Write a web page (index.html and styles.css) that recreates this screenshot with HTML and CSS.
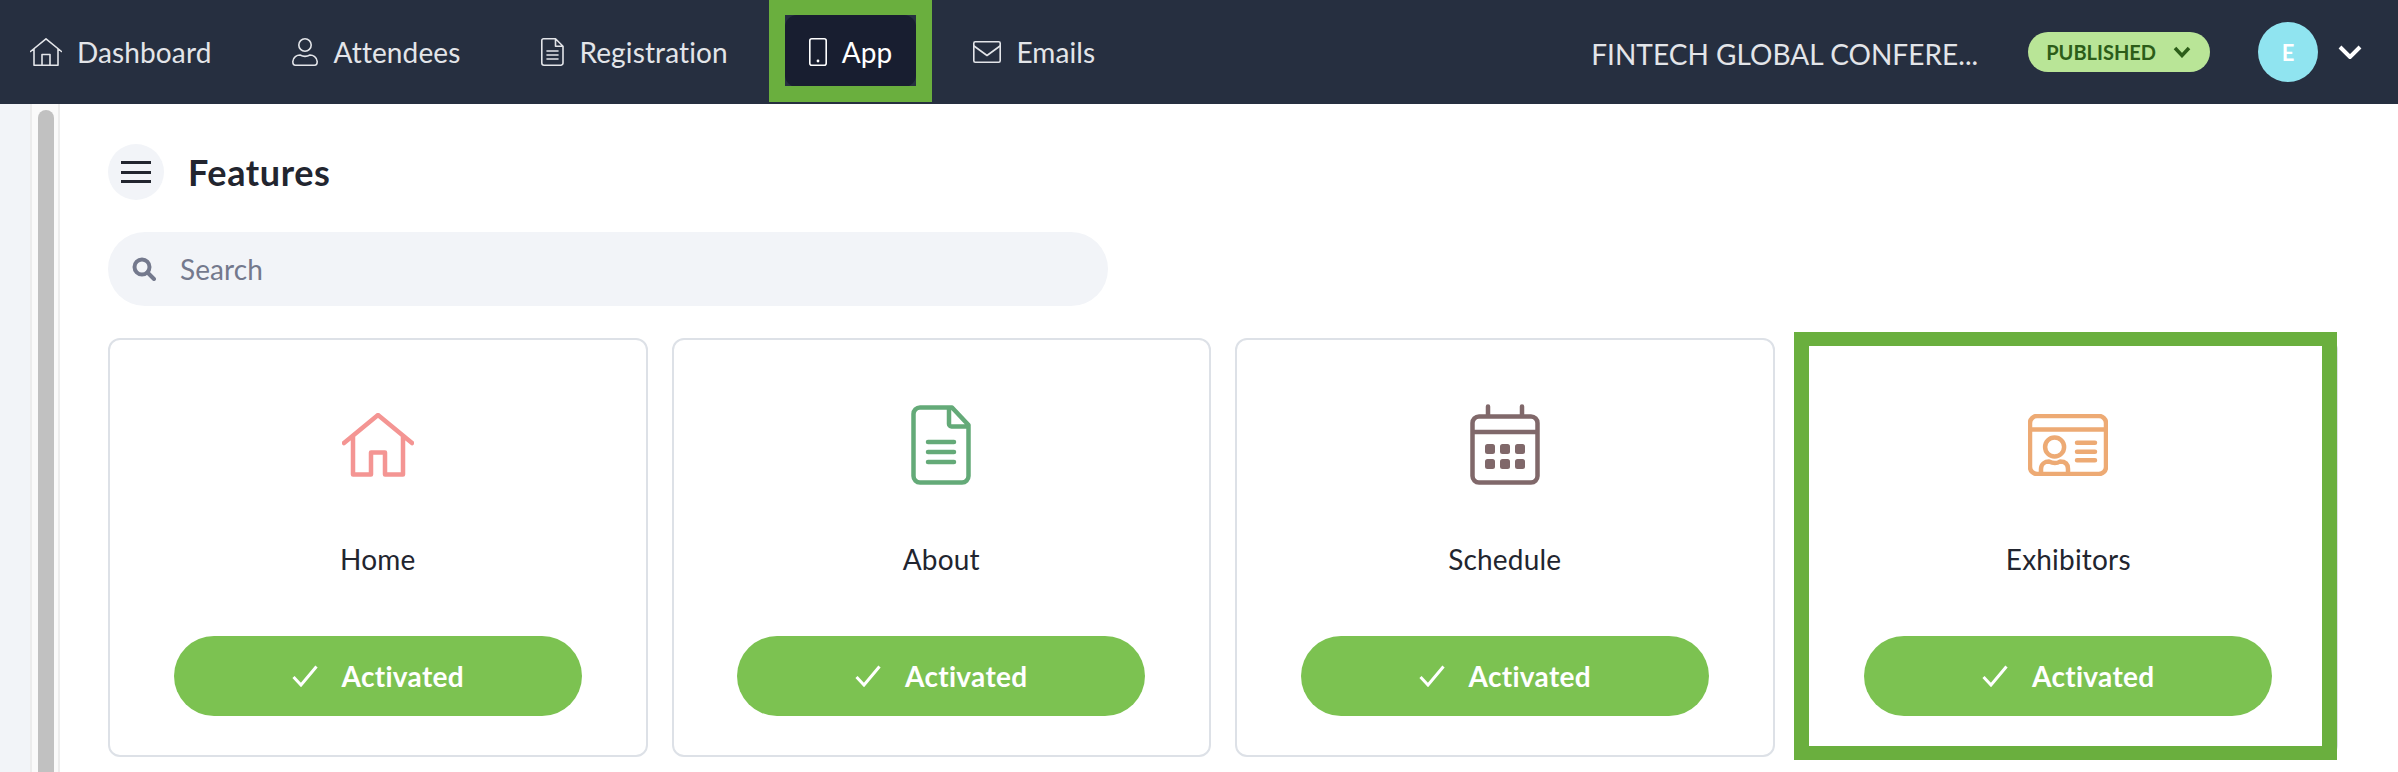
FILE: index.html
```html
<!DOCTYPE html>
<html lang="en">
<head>
<meta charset="utf-8">
<title>Features</title>
<link rel="stylesheet" href="styles.css">
</head>
<body>
<header class="topbar">
  <nav class="nav">
    <a class="nav-item">
      <svg class="nav-icon" width="32" height="28" viewBox="0 0 32 28"><path d="M0.5 13.5 16 0.8 31.5 13.5M4 11V27.2H28V11M12 27.2V16.5H20V27.2"/></svg>
      <span>Dashboard</span>
    </a>
    <a class="nav-item">
      <svg class="nav-icon" width="26" height="28" viewBox="0 0 26 28"><circle cx="13" cy="7" r="6.2"/><path d="M8 17C5 17 1 19 0.8 23.5 0.8 26 1.6 27.2 3.5 27.2H22.5C24.4 27.2 25.2 26 25.2 23.5 25 19 21 17 18 17 15 18.6 11 18.6 8 17Z"/></svg>
      <span>Attendees</span>
    </a>
    <a class="nav-item">
      <svg class="nav-icon" width="23" height="28" viewBox="0 0 23 28"><path d="M2.5 0.8H14.5L22 8.2V25A2.2 2.2 0 0 1 19.8 27.2H3A2.2 2.2 0 0 1 0.8 25V2.5A1.7 1.7 0 0 1 2.5 0.8ZM14.5 0.8V8.2H22M6 13H17M6 17H17M6 21H17"/></svg>
      <span>Registration</span>
    </a>
    <a class="nav-item nav-item-active">
      <svg class="nav-icon" width="18" height="28" viewBox="0 0 18 28"><rect x="0.8" y="0.8" width="16.4" height="26.4" rx="2"/><circle class="icon-dot" cx="9" cy="23" r="1.4"/></svg>
      <span>App</span>
      <span class="mark mark-nav"></span>
    </a>
    <a class="nav-item">
      <svg class="nav-icon" width="28" height="22" viewBox="0 0 28 22"><rect x="0.8" y="0.8" width="26.4" height="20.4" rx="1.5"/><path d="M1 5 14 14.5 27 5"/></svg>
      <span>Emails</span>
    </a>
  </nav>
  <div class="topbar-right">
    <span class="event-name">FINTECH GLOBAL CONFERE...</span>
    <span class="status">
      <span>PUBLISHED</span>
      <svg class="status-chevron" width="18" height="12" viewBox="0 0 18 12"><path d="M2 2 9 9.5 16 2"/></svg>
    </span>
    <span class="avatar">E</span>
    <svg class="user-chevron" width="24" height="14" viewBox="0 0 24 14"><path d="M2 2 12 12 22 2"/></svg>
  </div>
</header>

<div class="layout">
  <div class="side-strip"></div>
  <div class="scroll-track"><div class="scroll-thumb"></div></div>
  <main class="main">
    <div class="page-head">
      <span class="menu-btn"><span class="menu-bars"></span></span>
      <h1 class="page-title">Features</h1>
    </div>
    <div class="search">
      <svg class="search-icon" width="24" height="24" viewBox="0 0 24 24"><circle cx="10" cy="10" r="7.5"/><path d="M15.5 15.5 22 22"/></svg>
      <span>Search</span>
    </div>
    <section class="cards">
      <article class="card">
        <div class="card-icon">
          <svg class="icon-home" width="72" height="64" viewBox="0 0 72 64"><path d="M2 30 36 2 70 30M11 23V61.5H29V39.5H43V61.5H61V23"/></svg>
        </div>
        <div class="card-name">Home</div>
        <div class="activated"><svg class="check" width="26" height="22" viewBox="0 0 26 22"><path d="M1.5 12 9 20 24.500 1.500"/></svg><span>Activated</span></div>
      </article>
      <article class="card">
        <div class="card-icon">
          <svg class="icon-about" width="60" height="80" viewBox="0 0 60 80"><path d="M9 2.500H41L57.500 20V71A6.500 6.500 0 0 1 51 77.500H9A6.500 6.500 0 0 1 2.500 71V9A6.500 6.500 0 0 1 9 2.500ZM38 2.500V19A2.500 2.500 0 0 0 40.500 21.500H57.500M17 37H43M17 47H43M17 57H43"/></svg>
        </div>
        <div class="card-name">About</div>
        <div class="activated"><svg class="check" width="26" height="22" viewBox="0 0 26 22"><path d="M1.5 12 9 20 24.500 1.500"/></svg><span>Activated</span></div>
      </article>
      <article class="card">
        <div class="card-icon">
          <svg class="icon-schedule" width="70" height="81" viewBox="0 0 70 81"><path d="M9 12.500H61A6.500 6.500 0 0 1 67.500 19V72A6.500 6.500 0 0 1 61 78.500H9A6.500 6.500 0 0 1 2.500 72V19A6.500 6.500 0 0 1 9 12.500ZM2.500 28H67.500M18 2.500V12.500M52 2.500V12.500"/><g class="icon-fill"><rect x="15" y="40" width="10" height="10" rx="2.500"/><rect x="30" y="40" width="10" height="10" rx="2.500"/><rect x="45" y="40" width="10" height="10" rx="2.500"/><rect x="15" y="55" width="10" height="10" rx="2.500"/><rect x="30" y="55" width="10" height="10" rx="2.500"/><rect x="45" y="55" width="10" height="10" rx="2.500"/></g></svg>
        </div>
        <div class="card-name">Schedule</div>
        <div class="activated"><svg class="check" width="26" height="22" viewBox="0 0 26 22"><path d="M1.5 12 9 20 24.500 1.500"/></svg><span>Activated</span></div>
      </article>
      <article class="card">
        <div class="card-icon">
          <svg class="icon-exhibitors" width="80" height="62" viewBox="0 0 80 62"><path d="M9 2H71A7 7 0 0 1 78 9V53A7 7 0 0 1 71 60H9A7 7 0 0 1 2 53V9A7 7 0 0 1 9 2ZM2 15.500H78M49 28.700H67M49 37.700H67M49 46.300H67M13 60V55C13 50 17 47.500 21 47.500 25 49.500 29 49.500 32 47.500 37 47.500 40 50 40 55V60"/><circle cx="26.600" cy="33" r="9.500"/></svg>
        </div>
        <div class="card-name">Exhibitors</div>
        <div class="activated"><svg class="check" width="26" height="22" viewBox="0 0 26 22"><path d="M1.5 12 9 20 24.500 1.500"/></svg><span>Activated</span></div>
        <span class="mark mark-card"></span>
      </article>
    </section>
  </main>
</div>
</body>
</html>
```
FILE: styles.css
```css
* { box-sizing: border-box; }
html, body { margin: 0; height: 772px; overflow: hidden; background: #fff; }
body { font-family: "Lato", "Liberation Sans", sans-serif; font-size: 28px; color: #22252f; }

.topbar { display: flex; align-items: center; justify-content: space-between; height: 104px; padding: 0 36px 2px 6px; background: #262f40; }
.nav { display: flex; align-items: center; gap: 33px; letter-spacing: 0.12px; }
.nav-item { position: relative; display: flex; align-items: center; gap: 15px; height: 72px; padding: 2px 24px 0; border-radius: 12px; color: #e3e5e9; line-height: 1; }
.nav-icon { fill: none; stroke: currentColor; stroke-width: 1.6; stroke-linejoin: round; stroke-linecap: round; }
.nav-item-active { background: #181e30; color: #fff; }
.icon-dot { fill: currentColor; stroke: none; }

.mark { position: absolute; border-style: solid; border-color: #6aaf3e; pointer-events: none; }
.mark-nav { top: -16px; left: -16px; right: -16px; bottom: -15px; border-width: 16px; }
.mark-card { top: -8px; left: -6.500px; right: -1px; bottom: -5px; border-width: 14px 15px; }

.topbar-right { display: flex; align-items: center; padding-top: 2px; }
.event-name { width: 386px; white-space: nowrap; color: #e3e5e9; letter-spacing: 0.04px; margin-top: 4px; }
.status { display: flex; align-items: center; gap: 17px; height: 40px; margin-left: 51px; padding: 0 19px 0 18px; border-radius: 20px; background: #b9e597; color: #2c5d19; font-size: 20px; font-weight: 700; }
.status-chevron { fill: none; stroke: #2c5d19; stroke-width: 3.500; }
.avatar { display: flex; align-items: center; justify-content: center; width: 60px; height: 60px; margin-left: 48px; border-radius: 50%; background: #90e4f0; color: #fff; font-size: 22px; font-weight: 700; }
.user-chevron { margin-left: 20px; fill: none; stroke: #fff; stroke-width: 4; }

.layout { display: flex; height: 668px; }
.side-strip { width: 30px; background: #f2f4f8; }
.scroll-track { display: flex; width: 30px; padding: 6px 4px 0 6px; background: #fafafa; border-left: 2px solid #ececec; border-right: 2px solid #ececec; }
.scroll-thumb { width: 16px; background: #c1c1c1; border-radius: 8px 8px 0 0; }
.main { flex: 1; min-width: 0; padding: 40px 60px 0 48px; }

.page-head { display: flex; align-items: center; gap: 24px; height: 56px; }
.menu-btn { display: flex; align-items: center; justify-content: center; width: 56px; height: 56px; border-radius: 50%; background: #f2f4f8; }
.menu-bars { position: relative; width: 30px; height: 22px; border-top: 3px solid #22252f; border-bottom: 3px solid #22252f; }
.menu-bars::before { content: ""; position: absolute; left: 0; right: 0; top: 6.500px; height: 3px; background: #22252f; }
.page-title { margin: 0; font-size: 36px; font-weight: 700; letter-spacing: 0.6px; color: #22252f; }

.search { display: flex; align-items: center; gap: 24px; width: 1000px; height: 74px; margin-top: 32px; padding-left: 24px; border-radius: 37px; background: #f2f4f8; color: #74798d; letter-spacing: 0.1px; }
.search-icon { fill: none; stroke: #74798d; stroke-width: 4; stroke-linecap: round; }

.cards { display: grid; grid-template-columns: repeat(4, 1fr); gap: 24px; margin-top: 32px; }
.card { position: relative; display: flex; flex-direction: column; align-items: center; height: 419px; padding-top: 64px; border: 2px solid #dde1e7; border-radius: 12px; background: #fff; }
.card-icon { display: flex; align-items: center; justify-content: center; height: 81px; }
.card-icon svg { fill: none; stroke-width: 4.500; stroke-linecap: round; stroke-linejoin: round; }
.icon-home { stroke: #f49593; }
.icon-about { stroke: #64aa78; }
.icon-schedule { stroke: #80686a; }
.icon-fill { fill: #80686a; stroke: none; }
.icon-exhibitors { stroke: #edaa74; }
.card-name { margin-top: 57px; line-height: 34px; letter-spacing: 0.2px; }
.activated { display: flex; align-items: center; justify-content: center; gap: 24px; width: 408px; height: 80px; margin-top: 60px; border-radius: 40px; background: #7cc251; color: #fff; font-weight: 700; letter-spacing: 0.3px; }
.check { fill: none; stroke: #fff; stroke-width: 3; }
```
